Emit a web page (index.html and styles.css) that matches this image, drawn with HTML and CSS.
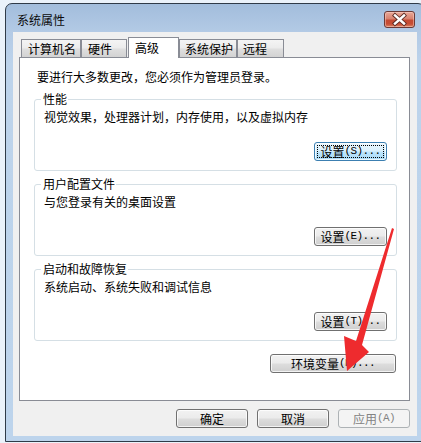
FILE: index.html
```html
<!DOCTYPE html>
<html lang="zh-CN">
<head>
<meta charset="utf-8">
<title>系统属性</title>
<link rel="stylesheet" href="styles.css">
</head>
<body>
<div class="screen">
  <div class="window">
    <div class="titlebar">
      <span class="title">系统属性</span>
      <div class="close">
        <svg width="29" height="15" viewBox="0 0 29 15">
          <path d="M10 3.5 L19 11.5 M19 3.5 L10 11.5" stroke="#5a2a22" stroke-width="4.2" stroke-linecap="square" fill="none"/>
          <path d="M10 3.5 L19 11.5 M19 3.5 L10 11.5" stroke="#ffffff" stroke-width="2.4" stroke-linecap="square" fill="none"/>
        </svg>
      </div>
    </div>
    <div class="client">
      <div class="tabs">
        <div class="tab t1">计算机名</div>
        <div class="tab t2">硬件</div>
        <div class="tab t3 selected">高级</div>
        <div class="tab t4">系统保护</div>
        <div class="tab t5">远程</div>
      </div>
      <div class="panel">
        <p class="intro">要进行大多数更改，您必须作为管理员登录。</p>
        <div class="group">
          <span class="legend">性能</span>
          <p class="desc">视觉效果，处理器计划，内存使用，以及虚拟内存</p>
          <button class="btn set focus">设置<span class="lat">(S)...</span></button>
        </div>
        <div class="group">
          <span class="legend">用户配置文件</span>
          <p class="desc">与您登录有关的桌面设置</p>
          <button class="btn set">设置<span class="lat">(E)...</span></button>
        </div>
        <div class="group">
          <span class="legend">启动和故障恢复</span>
          <p class="desc">系统启动、系统失败和调试信息</p>
          <button class="btn set">设置<span class="lat">(T)...</span></button>
        </div>
        <div class="env-row">
          <button class="btn env">环境变量<span class="lat">(N)...</span></button>
        </div>
      </div>
      <div class="footer">
        <button class="btn dlg">确定</button>
        <button class="btn dlg">取消</button>
        <button class="btn dlg disabled">应用<span class="lat">(A)</span></button>
      </div>
    </div>
  </div>
  <svg class="arrow" width="421" height="443" viewBox="0 0 421 443">
    <polygon points="392,228 394,229 362,345 369,352 347,371 344,336 356,341" fill="#ee2b2e"/>
  </svg>
</div>
</body>
</html>
```

FILE: styles.css
```css
html, body {
  margin: 0;
  padding: 0;
  width: 421px;
  height: 443px;
  overflow: hidden;
}

body {
  background: #eaf2fa;
  font-family: "Noto Sans CJK SC", "Noto Sans", sans-serif;
  font-size: 12px;
  color: #000;
}

.screen {
  position: relative;
  width: 421px;
  height: 443px;
  box-sizing: border-box;
  padding: 3px 0 0 5px;
}

.window {
  width: 420px;
  box-sizing: border-box;
  border: 1px solid #2f3b48;
  border-radius: 7px 7px 0 0;
  background: linear-gradient(#a2bddc 0px, #b3cae5 28px, #bcd3eb 60px, #bdd4ec 100%);
  padding: 0 7px 5px 7px;
}

.titlebar {
  height: 28px;
  display: flex;
  justify-content: space-between;
  align-items: flex-start;
  padding: 0 2px 0 4px;
}

.title {
  margin-top: 9px;
  line-height: 14px;
  color: #0b0b0b;
}

.close {
  margin-top: 7px;
  width: 31px;
  height: 17px;
  box-sizing: border-box;
  border: 1px solid #6b3a36;
  border-radius: 3px;
  background: linear-gradient(#e9a898 0%, #d8826f 45%, #c44a32 55%, #c74e35 80%, #da8463 100%);
  box-shadow: inset 0 0 0 1px rgba(255, 220, 210, 0.45);
  display: flex;
  align-items: center;
  justify-content: center;
}

.close svg {
  display: block;
}

.client {
  height: 404px;
  box-sizing: border-box;
  background: #f0f0f0;
  padding: 5px 7px 0 6px;
  display: flex;
  flex-direction: column;
}

.tabs {
  height: 20px;
  display: flex;
  align-items: flex-end;
  padding-left: 2px;
}

.tab {
  box-sizing: border-box;
  height: 18px;
  border: 1px solid #898c95;
  border-bottom: none;
  background: linear-gradient(#f4f4f4 0%, #ececec 45%, #dedede 55%, #d3d3d3 100%);
  padding: 2px 0 0 5px;
  line-height: 14px;
  white-space: nowrap;
}

.t1 { width: 60px; padding-left: 6px; }
.t2 { width: 46px; padding-left: 6px; }
.t3 { width: 51px; padding-left: 6px; margin-left: 1px; }
.t4 { width: 58px; }
.t5 { width: 47px; }

.tab.selected {
  position: relative;
  z-index: 1;
  height: 21px;
  margin-bottom: -1px;
  background: #fff;
  padding-top: 3px;
}

.panel {
  height: 344px;
  box-sizing: border-box;
  border: 1px solid #898c95;
  background: #fff;
  padding: 12px 12px 0 14px;
  display: flex;
  flex-direction: column;
}

.intro {
  margin: 0 0 15px 3px;
  line-height: 14px;
}

.group {
  position: relative;
  height: 72px;
  box-sizing: border-box;
  border: 1px solid #d5dfe5;
  border-radius: 3px;
  padding: 10px 9px 9px 9px;
  margin-bottom: 13px;
  display: flex;
  flex-direction: column;
}

.legend {
  position: absolute;
  top: -8px;
  left: 6px;
  background: #fff;
  padding: 0 1px 0 2px;
  line-height: 14px;
}

.desc {
  margin: 0;
  line-height: 14px;
}

.btn {
  box-sizing: border-box;
  height: 19px;
  padding: 0;
  border: 1px solid #707070;
  border-radius: 3px;
  background: linear-gradient(#f2f2f2 0%, #ebebeb 48%, #dddddd 52%, #cfcfcf 100%);
  box-shadow: inset 0 0 0 1px rgba(255, 255, 255, 0.75);
  font-family: "Noto Sans CJK SC", "Noto Sans", sans-serif;
  font-size: 12px;
  line-height: 17px;
  color: #000;
  display: flex;
  align-items: center;
  justify-content: center;
  white-space: nowrap;
}

.lat {
  font-family: "Liberation Mono", "DejaVu Sans Mono", monospace;
  font-size: 11px;
  letter-spacing: -0.6px;
}

.set {
  width: 73px;
  margin-top: auto;
  align-self: flex-end;
}

.btn.focus {
  position: relative;
  border-color: #3c7fb1;
  background: linear-gradient(#eaf6fd 0%, #d9f0fc 48%, #bee6fd 52%, #a7d9f5 100%);
}

.btn.focus::after {
  content: "";
  position: absolute;
  top: 2px;
  left: 2px;
  right: 2px;
  bottom: 2px;
  border: 1px dotted #000;
}

.env-row {
  display: flex;
  justify-content: flex-end;
  padding-right: 1px;
}

.env {
  width: 126px;
}

.footer {
  margin-top: 8px;
  display: flex;
  justify-content: flex-end;
  gap: 9px;
}

.dlg {
  width: 72px;
}

.btn.disabled {
  border-color: #adb2b5;
  background: #f4f4f4;
  box-shadow: none;
  color: #838383;
}

.arrow {
  position: absolute;
  left: 0;
  top: 0;
  pointer-events: none;
}
```
